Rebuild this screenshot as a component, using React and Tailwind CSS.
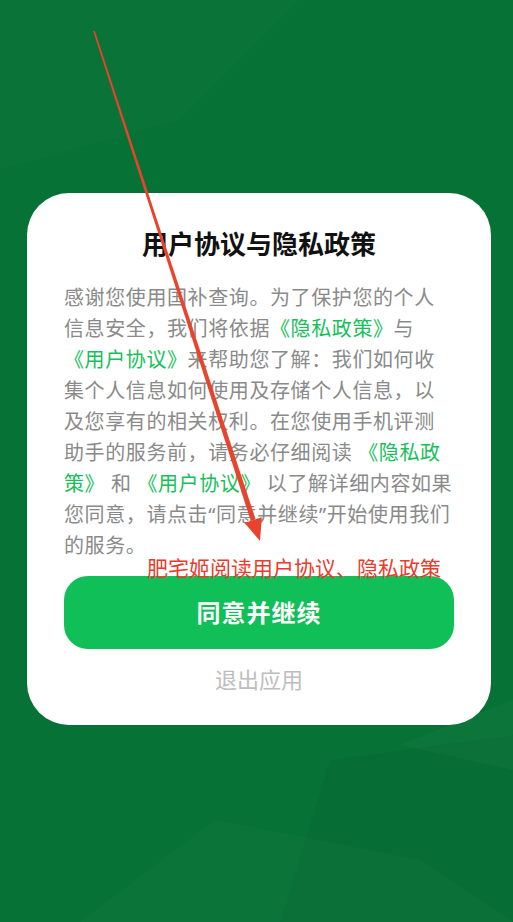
import React from 'react';

const bodyFont = { fontFamily: '"Noto Sans", "Noto Sans CJK SC", sans-serif' };

function Link({ children }) {
  return <span className="text-[#16c05a]">{children}</span>;
}

function Arrow() {
  // red annotation arrow drawn over the screenshot
  return (
    <svg className="absolute left-0 top-0 pointer-events-none" width="513" height="922" viewBox="0 0 513 922">
      <polygon points="94.8,30.7 93.2,31.3 250.8,520.9 255.6,519.3" fill="#e8432c" />
      <polygon points="260,541 244.6,522.9 261.8,517.3" fill="#e8432c" />
    </svg>
  );
}

function Backdrop() {
  return (
    <svg className="absolute left-0 top-0 pointer-events-none" width="513" height="922" viewBox="0 0 513 922">
      <polygon points="0,0 300,0 180,120 0,170" fill="#ffffff" opacity="0.012" />
      <polygon points="330,760 513,735 513,922 280,922" fill="#000000" opacity="0.03" />
      <polygon points="80,922 215,820 420,860 513,922" fill="#ffffff" opacity="0.02" />
      <polygon points="400,745 513,700 513,770" fill="#ffffff" opacity="0.025" />
    </svg>
  );
}

export default function App() {
  return (
    <div className="relative w-[513px] h-[922px] bg-[#077236] overflow-hidden" style={bodyFont}>
      <Backdrop />
      <div className="relative pt-[193px] pl-[27px]">
        <div className="relative w-[464px] bg-white rounded-[42px] px-[37px] pt-[32px] pb-[31px]">
          <h1
            className="text-center text-[26px] leading-[36px] font-bold text-[#111111]"
            style={{ fontFamily: '"Noto Sans CJK SC", sans-serif' }}
          >
            用户协议与隐私政策
          </h1>
          <p className="mt-[21px] w-[390px] text-[20px] leading-[31px] tracking-[0.6px] text-[#8a8a8a]">
            感谢您使用国补查询。为了保护您的个人信息安全，我们将依据<Link>《隐私政策》</Link>与
            <Link>《用户协议》</Link>来帮助您了解：我们如何收集个人信息如何使用及存储个人信息，以及您享有的相关权利。在您使用手机评测助手的服务前，请务必仔细阅读 <Link>《隐私政策》</Link> 和 <Link>《用户协议》</Link> 以了解详细内容如果您同意，请点击“同意并继续”开始使用我们的服务。
          </p>
          <span className="absolute left-[120px] top-[361px] text-[21px] leading-[28px] text-[#ea3b2b] whitespace-nowrap">
            肥宅姬阅读用户协议、隐私政策
          </span>
          <button className="mt-[15px] w-full h-[73px] rounded-[24px] bg-[#10bf58] text-white text-[24px] font-bold tracking-[1px]">
            同意并继续
          </button>
          <div className="mt-[15px] text-center text-[22px] leading-[30px] text-[#bdbdbd]">退出应用</div>
        </div>
      </div>
      <Arrow />
    </div>
  );
}
